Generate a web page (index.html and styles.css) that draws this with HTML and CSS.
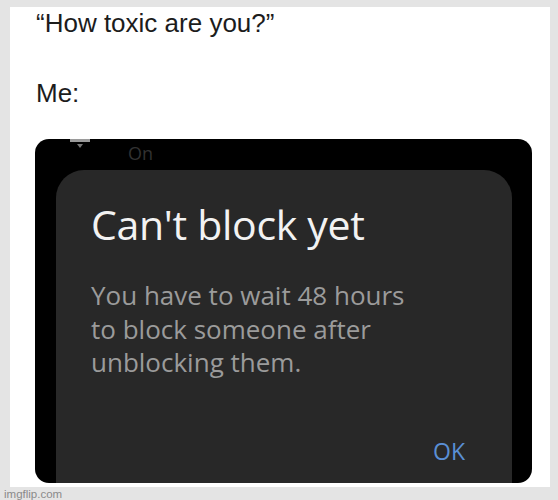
FILE: index.html
```html
<!DOCTYPE html>
<html>
<head>
<meta charset="utf-8">
<link rel="stylesheet" href="styles.css">
</head>
<body>
<div class="card">
  <p class="line q">“How toxic are you?”</p>
  <p class="line me">Me:</p>
  <div class="phone">
    <div class="status">
      <div class="tick">
        <svg width="20" height="10" viewBox="0 0 20 10"><rect x="0" y="0" width="20" height="3" fill="#9a9a9a"/><path d="M7 5 L13 5 L10 9 Z" fill="#777"/></svg>
      </div>
      <span class="on">On</span>
    </div>
    <div class="dialog">
      <h1 class="title">Can't block yet</h1>
      <p class="body">You have to wait 48 hours<br>to block someone after<br>unblocking them.</p>
      <div class="actions"><span class="ok">OK</span></div>
    </div>
  </div>
</div>
<div class="mark">imgflip.com</div>
</body>
</html>
```
FILE: styles.css
```css
html, body {
  margin: 0;
  padding: 0;
}
body {
  background: #e4e4e4;
  font-family: "Liberation Sans", Arial, sans-serif;
  width: 558px;
  height: 500px;
  overflow: hidden;
}
.card {
  margin: 7px 0 0 10px;
  width: 540px;
  height: 480px;
  background: #ffffff;
  display: flex;
  flex-direction: column;
}
.line {
  margin: 0 0 0 26px;
  font-size: 26px;
  line-height: 30px;
  color: #1c1c1c;
}
.q {
  margin-top: 1px;
}
.me {
  margin-top: 40px;
}
.phone {
  margin: 31px 0 0 25px;
  width: 497px;
  height: 344px;
  background: #000;
  border-radius: 14px;
  overflow: hidden;
  display: flex;
  flex-direction: column;
}
.status {
  height: 31px;
  display: flex;
  align-items: flex-start;
  flex: none;
}
.tick {
  margin-left: 35px;
  height: 10px;
  line-height: 0;
}
.on {
  margin-left: 38px;
  margin-top: 4px;
  font-family: "Open Sans", "Noto Sans", sans-serif;
  font-size: 18px;
  line-height: 20px;
  color: #323232;
}
.dialog {
  margin-left: 21px;
  width: 456px;
  flex: 1;
  background: #282828;
  border-radius: 28px 28px 0 0;
  padding: 0 0 0 35px;
  box-sizing: border-box;
  display: flex;
  flex-direction: column;
  font-family: "Open Sans", "Noto Sans", sans-serif;
}
.title {
  margin: 30px 0 0 0;
  font-size: 41px;
  font-weight: 400;
  line-height: 48px;
  letter-spacing: -0.3px;
  color: #f2f2f2;
}
.body {
  margin: 31px 0 0 0;
  font-size: 26px;
  line-height: 33.5px;
  color: #9b9b9b;
}
.actions {
  margin-top: auto;
  margin-bottom: 19px;
  display: flex;
  justify-content: flex-end;
  padding-right: 47px;
}
.ok {
  font-size: 23px;
  line-height: 26px;
  color: #5a8fd4;
}
.mark {
  margin: 1px 0 0 4px;
  font-size: 11.5px;
  line-height: 12px;
  color: #8a8a8a;
}
```
